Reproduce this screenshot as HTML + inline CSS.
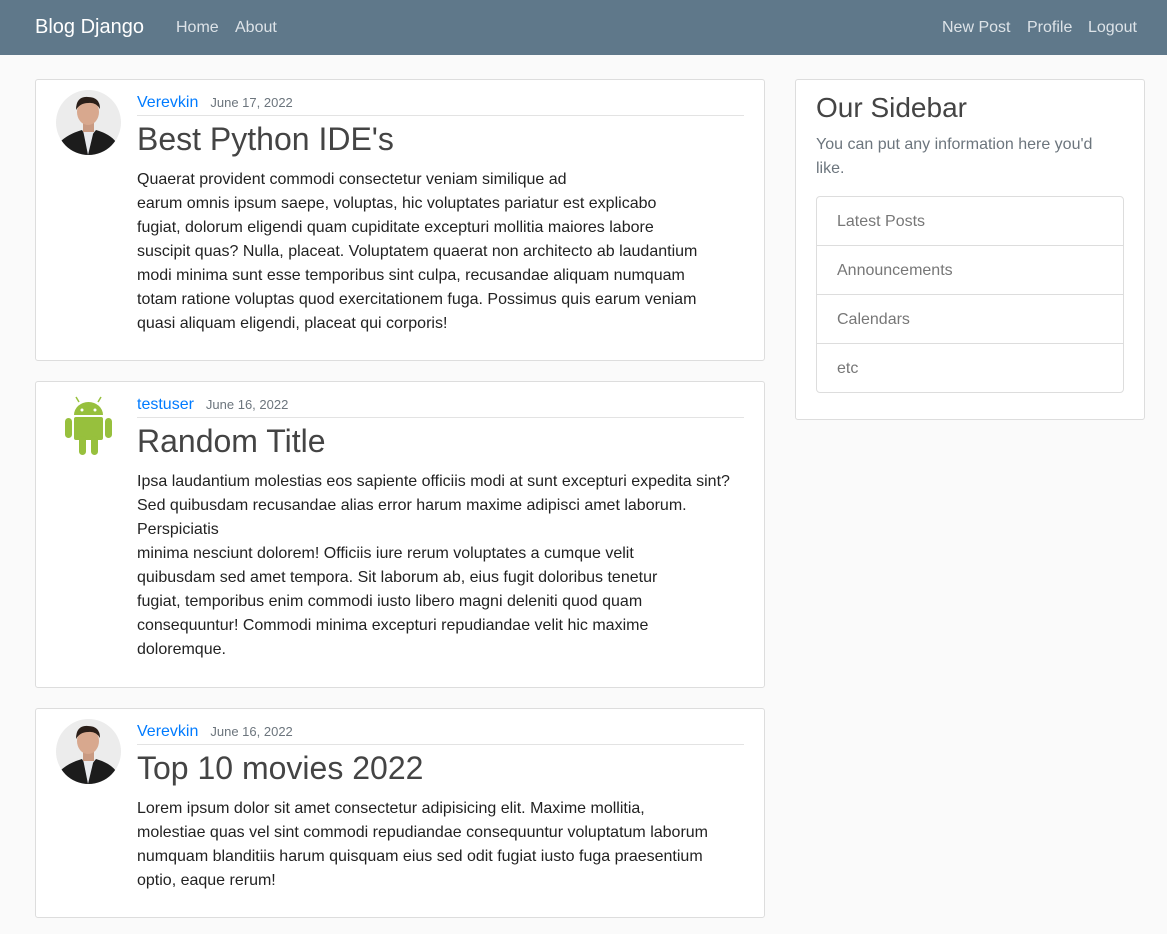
<!DOCTYPE html>
<html><head><meta charset="utf-8"><style>
*{box-sizing:border-box;margin:0;padding:0}
body{width:1167px;height:934px;background:#fafafa;font-family:"Liberation Sans",sans-serif;color:#333;overflow:hidden;position:relative}
.nav{position:absolute;left:0;top:0;width:1167px;height:55px;background:#5f788a;color:#fff}
.nav span{position:absolute;top:19px;font-size:16px;color:#dde3e8}
.brand{font-size:20px!important;color:#fff!important;top:16px!important;left:35px}
.card{position:absolute;left:35px;width:730px;background:#fff;border:1px solid #ddd;border-radius:3px}
.av{position:absolute;left:20px;top:10px;width:65px;height:65px;border-radius:50%;overflow:hidden}
.meta{position:absolute;left:101px;right:20px;top:13px;height:23px;border-bottom:1px solid #e3e3e3;font-size:16px;padding-top:1px}
.meta a{color:#007bff}
.meta small{font-size:13px;color:#6c757d;margin-left:12px}
h2{position:absolute;left:101px;font-size:32px;font-weight:400;color:#444;}
.txt{position:absolute;left:101px;font-size:16px;line-height:24px;color:#222}
.side{position:absolute;left:795px;top:79px;width:350px;height:341px;background:#fff;border:1px solid #ddd;border-radius:3px}
.side h3{position:absolute;left:20px;top:12px;font-size:28px;font-weight:400;color:#444}
.side p{position:absolute;left:20px;top:53px;font-size:16px;line-height:24px;color:#6c757d;width:300px}
.list{position:absolute;left:20px;top:116px;width:308px;border:1px solid #ddd;border-radius:4px}
.list div{height:49px;border-top:1px solid #ddd;padding:16px 20px 0;font-size:16px;color:#777}
.list div:first-child{border-top:none;height:48px}
</style></head><body>
<div class="nav"><span class="brand">Blog Django</span><span style="left:176px">Home</span><span style="left:235px">About</span><span style="left:942px">New Post</span><span style="left:1027px">Profile</span><span style="left:1088px">Logout</span></div>

<svg width="0" height="0" style="position:absolute"><defs><symbol id="man" viewBox="0 0 65 65"><rect width="65" height="65" fill="#ececec"/><path d="M0 65 L4 52 Q12 44 26 40 L32 50 L40 40 Q54 44 60 52 L65 65Z" fill="#1c1c1c"/><path d="M27 40 L32 65 L38 40Z" fill="#e8eaee"/><rect x="27" y="30" width="11" height="12" fill="#c99a82"/><ellipse cx="32" cy="22" rx="11" ry="13" fill="#d8a88e"/><path d="M20 20 Q20 6 32 7 Q44 7 44 19 Q40 12 32 13 Q24 13 20 20Z" fill="#2a1e18"/></symbol></defs></svg>

<div class="card" style="top:79px;height:282px">
<svg class="av"><use href="#man"/></svg>
<div class="meta"><a>Verevkin</a><small>June 17, 2022</small></div>
<h2 style="top:41px">Best Python IDE's</h2>
<div class="txt" style="top:88px">Quaerat provident commodi consectetur veniam similique ad<br>earum omnis ipsum saepe, voluptas, hic voluptates pariatur est explicabo<br>fugiat, dolorum eligendi quam cupiditate excepturi mollitia maiores labore<br>suscipit quas? Nulla, placeat. Voluptatem quaerat non architecto ab laudantium<br>modi minima sunt esse temporibus sint culpa, recusandae aliquam numquam<br>totam ratione voluptas quod exercitationem fuga. Possimus quis earum veniam<br>quasi aliquam eligendi, placeat qui corporis!</div>
</div>

<div class="card" style="top:381px;height:307px">
<svg class="av" viewBox="0 0 65 65"><rect width="65" height="65" fill="#fff"/><g fill="#97c03d" transform="translate(0,-6)"><path d="M18 29 A14.5 13 0 0 1 47 29Z"/><rect x="18" y="31" width="29" height="23" rx="2"/><rect x="9" y="32" width="7" height="20" rx="3.5"/><rect x="49" y="32" width="7" height="20" rx="3.5"/><rect x="23" y="50" width="7" height="19" rx="3.5"/><rect x="35" y="50" width="7" height="19" rx="3.5"/><path d="M23 16 L20 11 M42 16 L45 11" stroke="#97c03d" stroke-width="1.5"/><circle cx="26" cy="24" r="1.5" fill="#fff"/><circle cx="39" cy="24" r="1.5" fill="#fff"/></g></svg>
<div class="meta"><a>testuser</a><small>June 16, 2022</small></div>
<h2 style="top:41px">Random Title</h2>
<div class="txt" style="top:88px">Ipsa laudantium molestias eos sapiente officiis modi at sunt excepturi expedita sint?<br>Sed quibusdam recusandae alias error harum maxime adipisci amet laborum.<br>Perspiciatis<br>minima nesciunt dolorem! Officiis iure rerum voluptates a cumque velit<br>quibusdam sed amet tempora. Sit laborum ab, eius fugit doloribus tenetur<br>fugiat, temporibus enim commodi iusto libero magni deleniti quod quam<br>consequuntur! Commodi minima excepturi repudiandae velit hic maxime<br>doloremque.</div>
</div>

<div class="card" style="top:708px;height:210px">
<svg class="av"><use href="#man"/></svg>
<div class="meta"><a>Verevkin</a><small>June 16, 2022</small></div>
<h2 style="top:41px">Top 10 movies 2022</h2>
<div class="txt" style="top:88px">Lorem ipsum dolor sit amet consectetur adipisicing elit. Maxime mollitia,<br>molestiae quas vel sint commodi repudiandae consequuntur voluptatum laborum<br>numquam blanditiis harum quisquam eius sed odit fugiat iusto fuga praesentium<br>optio, eaque rerum!</div>
</div>

<div class="side"><h3>Our Sidebar</h3><p>You can put any information here you'd like.</p>
<div class="list"><div>Latest Posts</div><div>Announcements</div><div>Calendars</div><div>etc</div></div></div>
</body></html>
